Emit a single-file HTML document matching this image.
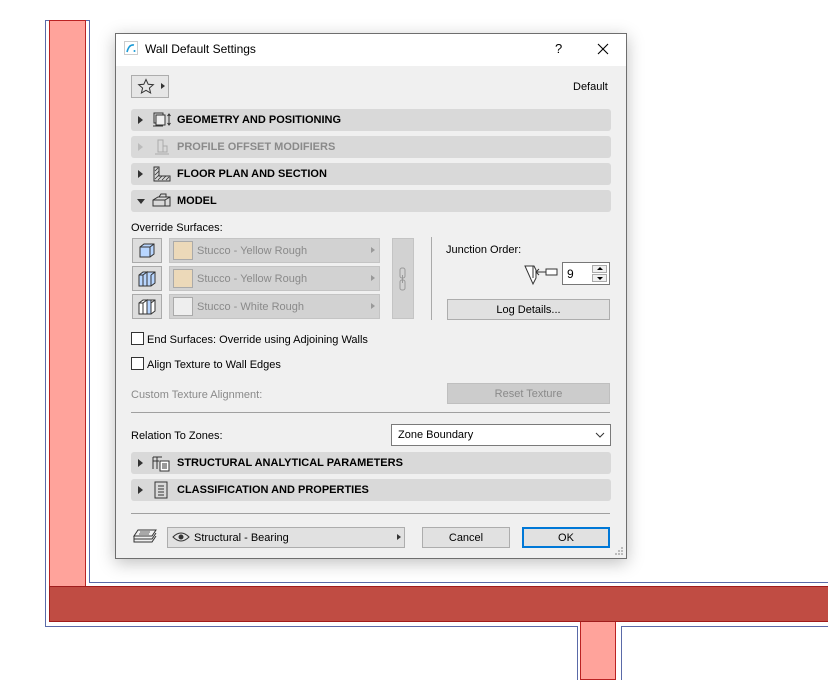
<!DOCTYPE html>
<html><head><meta charset="utf-8"><style>
*{box-sizing:border-box;margin:0;padding:0}
body{width:828px;height:680px;background:#fff;position:relative;overflow:hidden;font-family:"Liberation Sans",sans-serif;font-size:11px;color:#000}
.a{position:absolute}
.sec{position:absolute;left:131px;width:480px;height:22px;background:#d9d9d9;border-radius:3px;font-weight:bold;font-size:11px;line-height:23px}
.sec .t{position:absolute;left:46px}
.sec .tri{position:absolute;left:7px;top:7px;width:0;height:0;border-top:4px solid transparent;border-bottom:4px solid transparent;border-left:5px solid #333}
.sec svg{position:absolute;left:20px;top:2px}
.btn{position:absolute;background:#e1e1e1;border:1px solid #adadad;text-align:center;font-size:11px}
.mat{position:absolute;left:169px;width:211px;height:25px;background:#d2d2d2;border:1px solid #c4c4c4;color:#8a8a8a;line-height:25px;font-size:11px}
.mat .sw{position:absolute;left:3px;top:2px;width:20px;height:19px;border:1px solid #aaa}
.mat span{position:absolute;left:27px}
.mat i{position:absolute;right:4px;top:8px;border-top:3px solid transparent;border-bottom:3px solid transparent;border-left:4px solid #999}
.ic{position:absolute;left:132px;width:30px;height:25px;background:#ddd;border:1px solid #aaa}
.cb{position:absolute;left:131px;width:13px;height:13px;border:1px solid #333;background:#fff}
.bl{position:absolute;background:#5a6aa8}
</style></head><body>
<!-- background plan -->
<div class="bl" style="left:45px;top:20px;width:1px;height:607px"></div>
<div class="bl" style="left:45px;top:20px;width:44px;height:1px"></div>
<div class="bl" style="left:89px;top:20px;width:1px;height:563px"></div>
<div class="bl" style="left:89px;top:582px;width:740px;height:1px"></div>
<div class="bl" style="left:45px;top:626px;width:533px;height:1px"></div>
<div class="bl" style="left:621px;top:626px;width:207px;height:1px"></div>
<div class="bl" style="left:577px;top:626px;width:1px;height:54px"></div>
<div class="bl" style="left:621px;top:626px;width:1px;height:54px"></div>
<div class="a" style="left:49px;top:20px;width:37px;height:567px;background:#ffa39b;border:1px solid #b22;border-bottom:none"></div>
<div class="a" style="left:580px;top:621px;width:36px;height:59px;background:#ffa39b;border:1px solid #b22;border-top:none"></div>
<div class="a" style="left:49px;top:586px;width:779px;height:36px;background:#c04c43;border:1px solid #a01c1c;border-right:none"></div>
<!-- dialog -->
<div class="a" style="left:115px;top:33px;width:512px;height:526px;background:#f0f0f0;border:1px solid #6e6e6e;box-shadow:0 4px 16px rgba(0,0,0,.25)"></div>
<div class="a" style="left:116px;top:34px;width:510px;height:32px;background:#fff"></div>
<svg class="a" style="left:124px;top:41px" width="14" height="14"><rect x=".5" y=".5" width="13" height="13" fill="#fff" stroke="#ccc"/><path d="M3 11 Q5 3 10 4" stroke="#1a9ad6" stroke-width="1.6" fill="none"/><circle cx="10.5" cy="10" r="1" fill="#1a9ad6"/></svg>
<div class="a" style="left:145px;top:42px;font-size:12px">Wall Default Settings</div>
<div class="a" style="left:555px;top:41px;font-size:13px">?</div>
<svg class="a" style="left:597px;top:43px" width="12" height="12"><path d="M1 1L11 11M11 1L1 11" stroke="#000" stroke-width="1.1"/></svg>
<!-- star button -->
<div class="btn" style="left:131px;top:75px;width:38px;height:23px;background:#e6e6e6"></div>
<svg class="a" style="left:137px;top:78px" width="18" height="17"><path d="M9 1.5L11.2 6.3L16.3 6.7L12.4 10L13.6 15L9 12.3L4.4 15L5.6 10L1.7 6.7L6.8 6.3Z" fill="none" stroke="#333"/></svg>
<div class="a" style="left:161px;top:83px;border-top:3px solid transparent;border-bottom:3px solid transparent;border-left:4px solid #333"></div>
<div class="a" style="left:573px;top:81px">Default</div>
<!-- sections -->
<div class="sec" style="top:109px"><div class="tri"></div><svg width="22" height="18"><rect x="3" y="2" width="9" height="10" fill="none" stroke="#333"/><rect x="5" y="4" width="9" height="10" fill="#eee" stroke="#333"/><path d="M2 15h10" stroke="#333"/><path d="M18 3v11M16.5 5L18 3l1.5 2M16.5 12l1.5 2 1.5-2" stroke="#333" fill="none"/></svg><span class="t">GEOMETRY AND POSITIONING</span></div>
<div class="sec" style="top:136px;color:#8a8a8a"><div class="tri" style="border-left-color:#bbb"></div><svg width="22" height="18"><path d="M7 2h5v12H7zM12 8h4v6h-4M4 16h14" stroke="#aaa" fill="none"/></svg><span class="t">PROFILE OFFSET MODIFIERS</span></div>
<div class="sec" style="top:163px"><div class="tri"></div><svg width="22" height="18"><path d="M3 2v14h16v-5H8V2z" fill="none" stroke="#333"/><path d="M4 6l3-3M4 10l4-4M4 14l4-4M7 15l4-4M11 15l4-4M15 15l3-3" stroke="#333" stroke-width=".8"/></svg><span class="t">FLOOR PLAN AND SECTION</span></div>
<div class="sec" style="top:190px"><div class="tri" style="left:6px;top:9px;border-left:4px solid transparent;border-right:4px solid transparent;border-top:5px solid #333;border-bottom:none"></div><svg width="22" height="18"><path d="M2 8l5-3h12v9H2z M2 8h12v6M14 8l5-3" fill="none" stroke="#333"/><path d="M8 5l2-3h5v3" fill="none" stroke="#333"/></svg><span class="t">MODEL</span></div>
<div class="a" style="left:131px;top:222px">Override Surfaces:</div>
<!-- surfaces -->
<div class="ic" style="top:238px"><svg width="28" height="23"><path d="M7 8l4-3h10v10l-4 3H7z" fill="#b8d6ff" stroke="#333"/><path d="M7 8h10v10M17 8l4-3" fill="none" stroke="#333"/></svg></div>
<div class="ic" style="top:266px"><svg width="28" height="23"><path d="M6 8l4-3h12v11l-4 3H6z" fill="#b8d6ff" stroke="#333"/><path d="M6 8h4v11M10 8l4-3v14M18 8v11M18 8l4-3" fill="none" stroke="#333"/></svg></div>
<div class="ic" style="top:294px"><svg width="28" height="23"><path d="M6 8l4-3h12v11l-4 3H6z" fill="#fff" stroke="#333"/><path d="M6 8h4v11M10 8l4-3v14M18 8v11M18 8l4-3" fill="none" stroke="#333"/><path d="M14 5h4v14h-4z" fill="#b8d6ff" stroke="#333"/></svg></div>
<div class="mat" style="top:238px"><div class="sw" style="background:#ecd9b9"></div><span>Stucco - Yellow Rough</span><i></i></div>
<div class="mat" style="top:266px"><div class="sw" style="background:#ecd9b9"></div><span>Stucco - Yellow Rough</span><i></i></div>
<div class="mat" style="top:294px"><div class="sw" style="background:#eee"></div><span>Stucco - White Rough</span><i></i></div>
<div class="a" style="left:392px;top:238px;width:22px;height:81px;background:#d2d2d2;border:1px solid #c4c4c4"></div>
<svg class="a" style="left:397px;top:266px" width="12" height="26"><rect x="3" y="2" width="5" height="10" rx="2" fill="none" stroke="#999"/><rect x="3" y="14" width="5" height="10" rx="2" fill="none" stroke="#999"/><path d="M5.5 9v8" stroke="#999"/></svg>
<div class="a" style="left:431px;top:237px;width:1px;height:83px;background:#aaa"></div>
<div class="a" style="left:446px;top:244px">Junction Order:</div>
<svg class="a" style="left:523px;top:262px" width="38" height="24"><path d="M2 4h9l2 4v8l-3 6z" fill="#fff" stroke="#333"/><path d="M10 4v12" stroke="#333"/><path d="M13 10h10M16 7l-3 3 3 3" stroke="#333" fill="none"/><rect x="23" y="7" width="11" height="6" fill="#fff" stroke="#333"/></svg>
<div class="a" style="left:562px;top:262px;width:48px;height:23px;background:#fff;border:1px solid #777"></div>
<div class="a" style="left:567px;top:267px;font-size:12px">9</div>
<div class="a" style="left:592px;top:265px;width:15px;height:8px;border:1px solid #aaa;background:#f0f0f0"></div>
<div class="a" style="left:592px;top:274px;width:15px;height:8px;border:1px solid #aaa;background:#f0f0f0"></div>
<div class="a" style="left:597px;top:267px;border-left:3px solid transparent;border-right:3px solid transparent;border-bottom:3px solid #000"></div>
<div class="a" style="left:597px;top:277px;border-left:3px solid transparent;border-right:3px solid transparent;border-top:3px solid #000"></div>
<div class="btn" style="left:447px;top:299px;width:163px;height:21px;line-height:21px">Log Details...</div>
<div class="cb" style="top:332px"></div><div class="a" style="left:147px;top:334px">End Surfaces: Override using Adjoining Walls</div>
<div class="cb" style="top:357px"></div><div class="a" style="left:147px;top:359px">Align Texture to Wall Edges</div>
<div class="a" style="left:131px;top:389px;color:#8a8a8a">Custom Texture Alignment:</div>
<div class="btn" style="left:447px;top:383px;width:163px;height:21px;line-height:21px;background:#ccc;border-color:#bfbfbf;color:#8a8a8a">Reset Texture</div>
<div class="a" style="left:131px;top:412px;width:479px;height:1px;background:#a0a0a0"></div>
<div class="a" style="left:131px;top:430px">Relation To Zones:</div>
<div class="a" style="left:391px;top:424px;width:220px;height:22px;background:#fff;border:1px solid #7a7a7a;line-height:21px;padding-left:6px">Zone Boundary</div>
<svg class="a" style="left:595px;top:432px" width="10" height="6"><path d="M1 1l4 4 4-4" stroke="#333" fill="none"/></svg>
<div class="sec" style="top:452px"><div class="tri"></div><svg width="22" height="18"><path d="M2 3h9M2 3v12M2 7h6M6 3v12" stroke="#333" fill="none"/><rect x="9" y="7" width="9" height="10" fill="#fff" stroke="#333"/><path d="M11 10h5M11 12h5M11 14h5" stroke="#333"/></svg><span class="t">STRUCTURAL ANALYTICAL PARAMETERS</span></div>
<div class="sec" style="top:479px"><div class="tri"></div><svg width="22" height="18"><rect x="4" y="1" width="12" height="16" fill="none" stroke="#333"/><path d="M7 5h6M7 8h6M7 11h6M7 14h6" stroke="#333"/></svg><span class="t">CLASSIFICATION AND PROPERTIES</span></div>
<div class="a" style="left:131px;top:513px;width:479px;height:1px;background:#a0a0a0"></div>
<svg class="a" style="left:132px;top:527px" width="28" height="20"><path d="M6 3h18l-4 6H2zM2 9v3h18l4-6M2 12v3h18l4-6" fill="none" stroke="#333"/><path d="M8 5h10M7 7h10" stroke="#333" stroke-width=".7"/></svg>
<div class="btn" style="left:167px;top:527px;width:238px;height:21px;line-height:21px;text-align:left;padding-left:26px">Structural - Bearing</div>
<svg class="a" style="left:172px;top:531px" width="18" height="12"><path d="M1 6Q9 -2 17 6Q9 14 1 6z" fill="none" stroke="#333"/><circle cx="9" cy="6" r="2.5" fill="#333"/></svg>
<div class="a" style="left:397px;top:534px;border-top:3px solid transparent;border-bottom:3px solid transparent;border-left:4px solid #333"></div>
<div class="btn" style="left:422px;top:527px;width:88px;height:21px;line-height:21px">Cancel</div>
<div class="btn" style="left:522px;top:527px;width:88px;height:21px;line-height:19px;border:2px solid #0078d7">OK</div>
<svg class="a" style="left:614px;top:546px" width="10" height="10"><g fill="#bbb"><rect x="7" y="1" width="2" height="2"/><rect x="4" y="4" width="2" height="2"/><rect x="7" y="4" width="2" height="2"/><rect x="1" y="7" width="2" height="2"/><rect x="4" y="7" width="2" height="2"/><rect x="7" y="7" width="2" height="2"/></g></svg>
</body></html>
